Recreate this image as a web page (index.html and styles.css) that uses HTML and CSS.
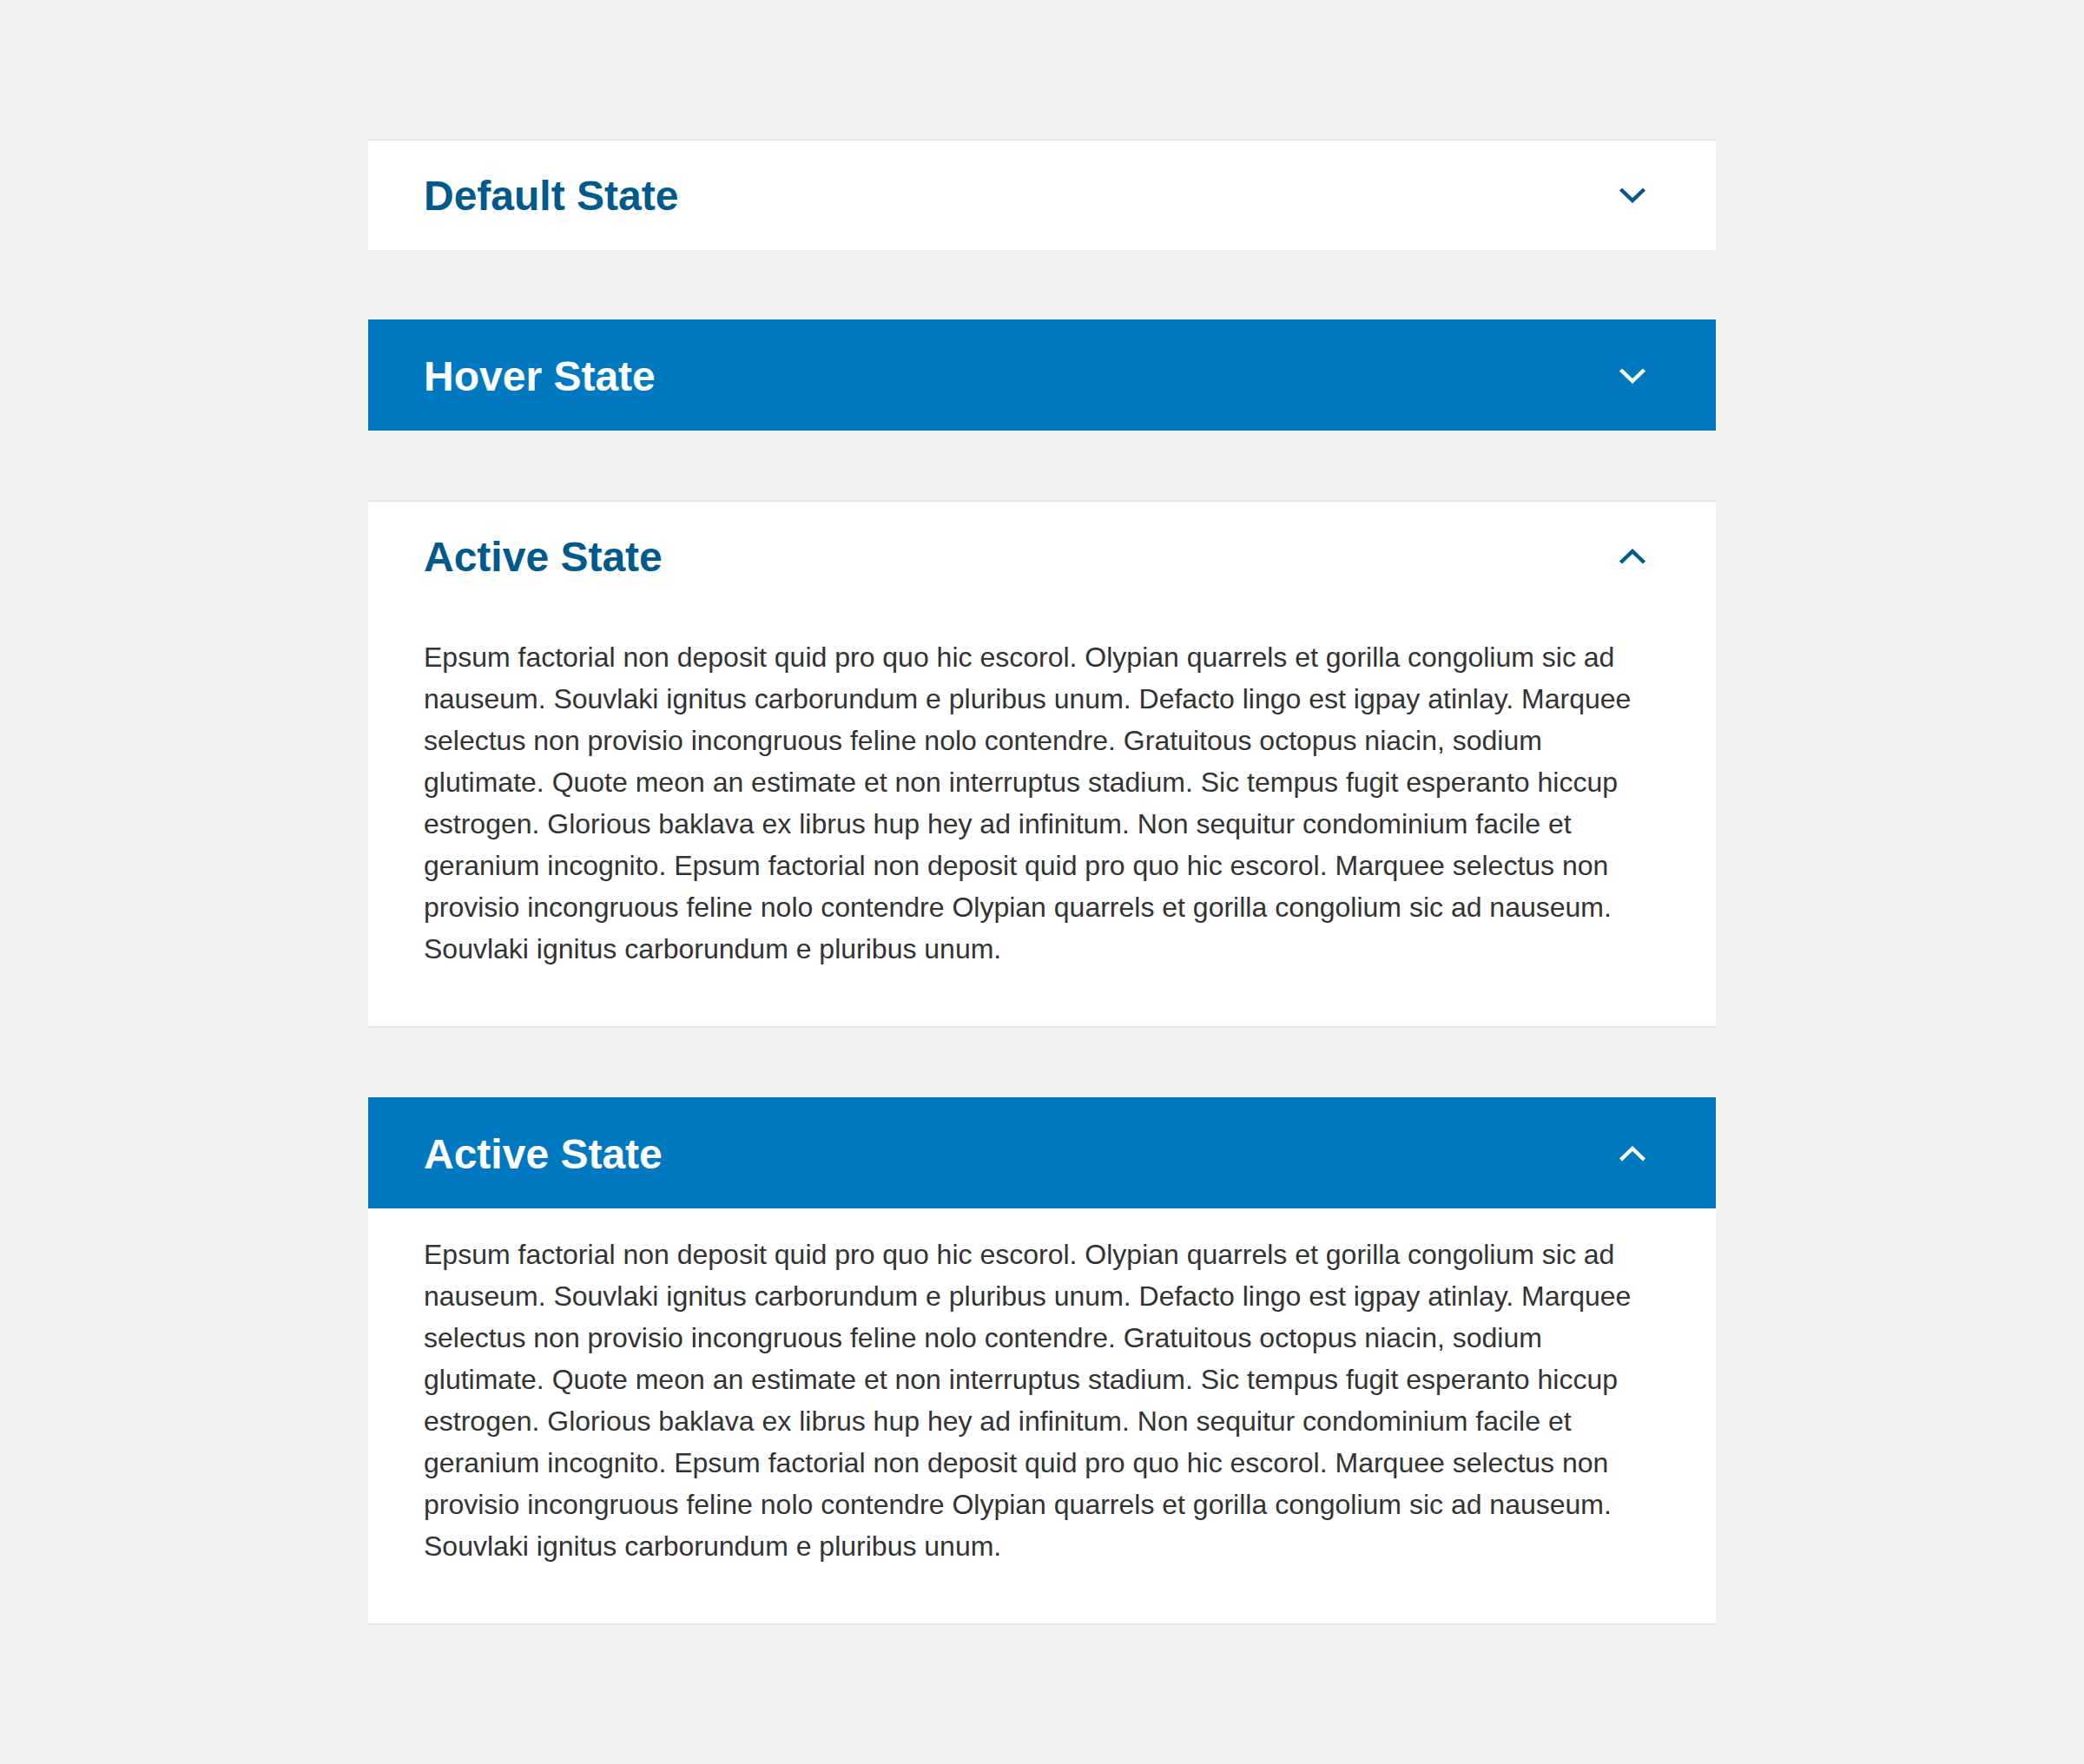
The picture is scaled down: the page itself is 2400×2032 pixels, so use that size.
FILE: index.html
```html
<!DOCTYPE html>
<html lang="en">
<head>
    <meta charset="UTF-8">
    <meta name="viewport" content="width=device-width, initial-scale=1.0">
    <title>Accordion States</title>
    <link rel="stylesheet" href="styles.css">
</head>
<body>
    <div class="accordion-list">

        <div class="accordion">
            <div class="accordion-header">
                <h2>Default State</h2>
                <svg class="chevron" viewBox="0 0 32 20" width="32" height="20"><polyline points="2.5,3 16,16 29.5,3"/></svg>
            </div>
        </div>

        <div class="accordion">
            <div class="accordion-header hover">
                <h2>Hover State</h2>
                <svg class="chevron" viewBox="0 0 32 20" width="32" height="20"><polyline points="2.5,3 16,16 29.5,3"/></svg>
            </div>
        </div>

        <div class="accordion open">
            <div class="accordion-header">
                <h2>Active State</h2>
                <svg class="chevron" viewBox="0 0 32 20" width="32" height="20"><polyline points="2.5,17 16,4 29.5,17"/></svg>
            </div>
            <div class="accordion-body">
                <p>Epsum factorial non deposit quid pro quo hic escorol. Olypian quarrels et gorilla congolium sic ad nauseum. Souvlaki ignitus carborundum e pluribus unum. Defacto lingo est igpay atinlay. Marquee selectus non provisio incongruous feline nolo contendre. Gratuitous octopus niacin, sodium glutimate. Quote meon an estimate et non interruptus stadium. Sic tempus fugit esperanto hiccup estrogen. Glorious baklava ex librus hup hey ad infinitum. Non sequitur condominium facile et geranium incognito. Epsum factorial non deposit quid pro quo hic escorol. Marquee selectus non provisio incongruous feline nolo contendre Olypian quarrels et gorilla congolium sic ad nauseum. Souvlaki ignitus carborundum e pluribus unum.</p>
            </div>
        </div>

        <div class="accordion open">
            <div class="accordion-header hover">
                <h2>Active State</h2>
                <svg class="chevron" viewBox="0 0 32 20" width="32" height="20"><polyline points="2.5,17 16,4 29.5,17"/></svg>
            </div>
            <div class="accordion-body">
                <p>Epsum factorial non deposit quid pro quo hic escorol. Olypian quarrels et gorilla congolium sic ad nauseum. Souvlaki ignitus carborundum e pluribus unum. Defacto lingo est igpay atinlay. Marquee selectus non provisio incongruous feline nolo contendre. Gratuitous octopus niacin, sodium glutimate. Quote meon an estimate et non interruptus stadium. Sic tempus fugit esperanto hiccup estrogen. Glorious baklava ex librus hup hey ad infinitum. Non sequitur condominium facile et geranium incognito. Epsum factorial non deposit quid pro quo hic escorol. Marquee selectus non provisio incongruous feline nolo contendre Olypian quarrels et gorilla congolium sic ad nauseum. Souvlaki ignitus carborundum e pluribus unum.</p>
            </div>
        </div>

    </div>
</body>
</html>
```

FILE: styles.css
```css
body {
    margin: 0;
    background-color: #f1f1f1;
    font-family: "Liberation Sans", Arial, Helvetica, sans-serif;
}

.accordion-list {
    width: 1552px;
    margin: 0 auto;
    padding: 160px 0;
    display: flex;
    flex-direction: column;
    gap: 80px;
}

.accordion {
    background-color: #fff;
}

.accordion.open {
    border-bottom: 2px solid #e3e3e3;
}

.accordion-header {
    height: 128px;
    box-sizing: border-box;
    border-top: 2px solid #e3e3e3;
    padding: 0 80px 0 64px;
    display: flex;
    align-items: center;
    justify-content: space-between;
    color: #005a8c;
}

.accordion-header h2 {
    margin: 0;
    font-size: 48px;
    font-weight: bold;
}

.accordion-header.hover {
    background-color: #0079c0;
    border-top-color: #0079c0;
    color: #fff;
}

.chevron {
    display: block;
}

.chevron polyline {
    fill: none;
    stroke: currentColor;
    stroke-width: 4.5;
    stroke-linejoin: miter;
}

.accordion-body {
    padding: 29px 64px 65px;
}

.accordion-body p {
    margin: 0;
    font-size: 32px;
    line-height: 48px;
    color: #333;
}
```
